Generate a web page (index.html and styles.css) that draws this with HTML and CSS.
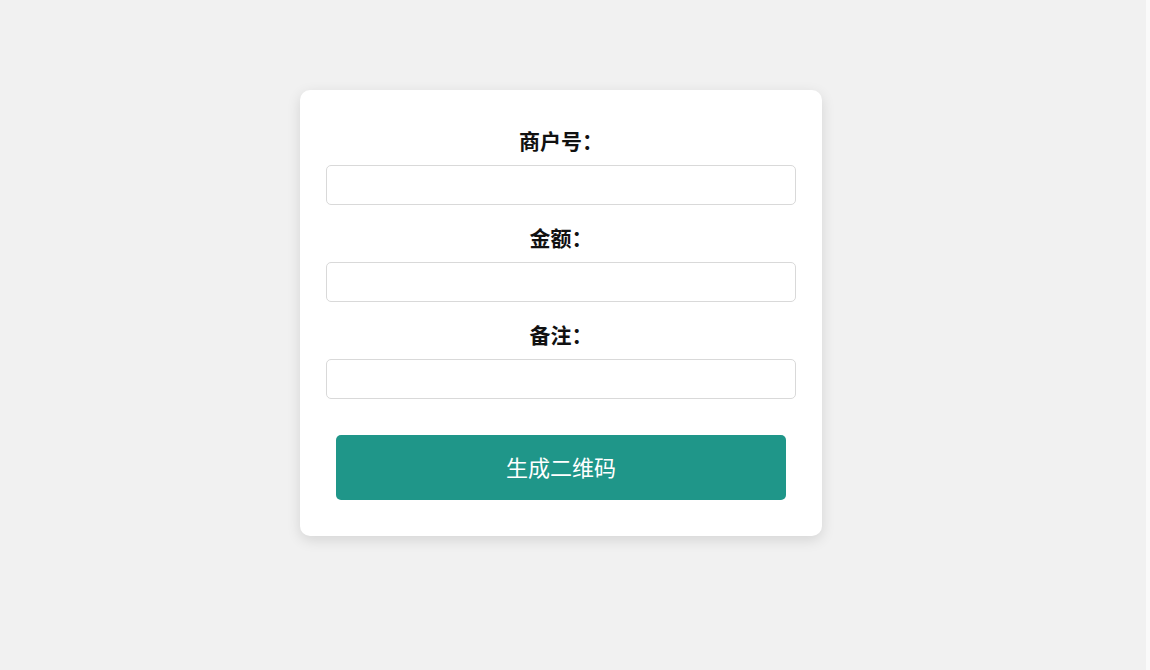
FILE: index.html
```html
<!DOCTYPE html>
<html lang="zh-CN">
<head>
<meta charset="utf-8">
<title>生成二维码</title>
<link rel="stylesheet" href="styles.css">
</head>
<body>
<div class="card">
  <div class="field">
    <label class="label" for="mch">商户号：</label>
    <input class="input" id="mch" type="text">
  </div>
  <div class="field">
    <label class="label" for="amt">金额：</label>
    <input class="input" id="amt" type="text">
  </div>
  <div class="field">
    <label class="label" for="note">备注：</label>
    <input class="input" id="note" type="text">
  </div>
  <button class="btn" type="button">生成二维码</button>
</div>
</body>
</html>
```
FILE: styles.css
```css
html, body {
  margin: 0;
  padding: 0;
  height: 100%;
}
body {
  background: linear-gradient(to right, #f1f1f1 calc(100% - 4px), #fafafa 0);
  font-family: "Noto Sans CJK SC", "Noto Sans", sans-serif;
  color: #111;
}
.card {
  box-sizing: border-box;
  width: 522px;
  margin: 90px 0 0 300px;
  padding: 38px 26px 36px;
  background: #fff;
  border-radius: 10px;
  box-shadow: 0 4px 14px rgba(0, 0, 0, 0.12);
}
.field {
  display: flex;
  flex-direction: column;
  margin-bottom: 20px;
}
.field:last-of-type {
  margin-bottom: 0;
}
.label {
  display: block;
  text-align: center;
  font-size: 21px;
  font-weight: 700;
  line-height: 24px;
  height: 24px;
  margin-bottom: 13px;
  color: #111;
}
.input {
  box-sizing: border-box;
  height: 40px;
  width: 100%;
  border: 1px solid #d9d9d9;
  border-radius: 5px;
  padding: 0 10px;
  font-size: 16px;
  background: #fff;
  outline: none;
}
.btn {
  display: block;
  box-sizing: border-box;
  width: 450px;
  height: 65px;
  margin: 36px auto 0;
  padding: 0 0 4px;
  border: none;
  border-radius: 5px;
  background: #1f9689;
  color: #fff;
  font-family: "Noto Sans CJK SC", "Noto Sans", sans-serif;
  font-size: 22px;
  font-weight: 400;
  cursor: pointer;
}
```
